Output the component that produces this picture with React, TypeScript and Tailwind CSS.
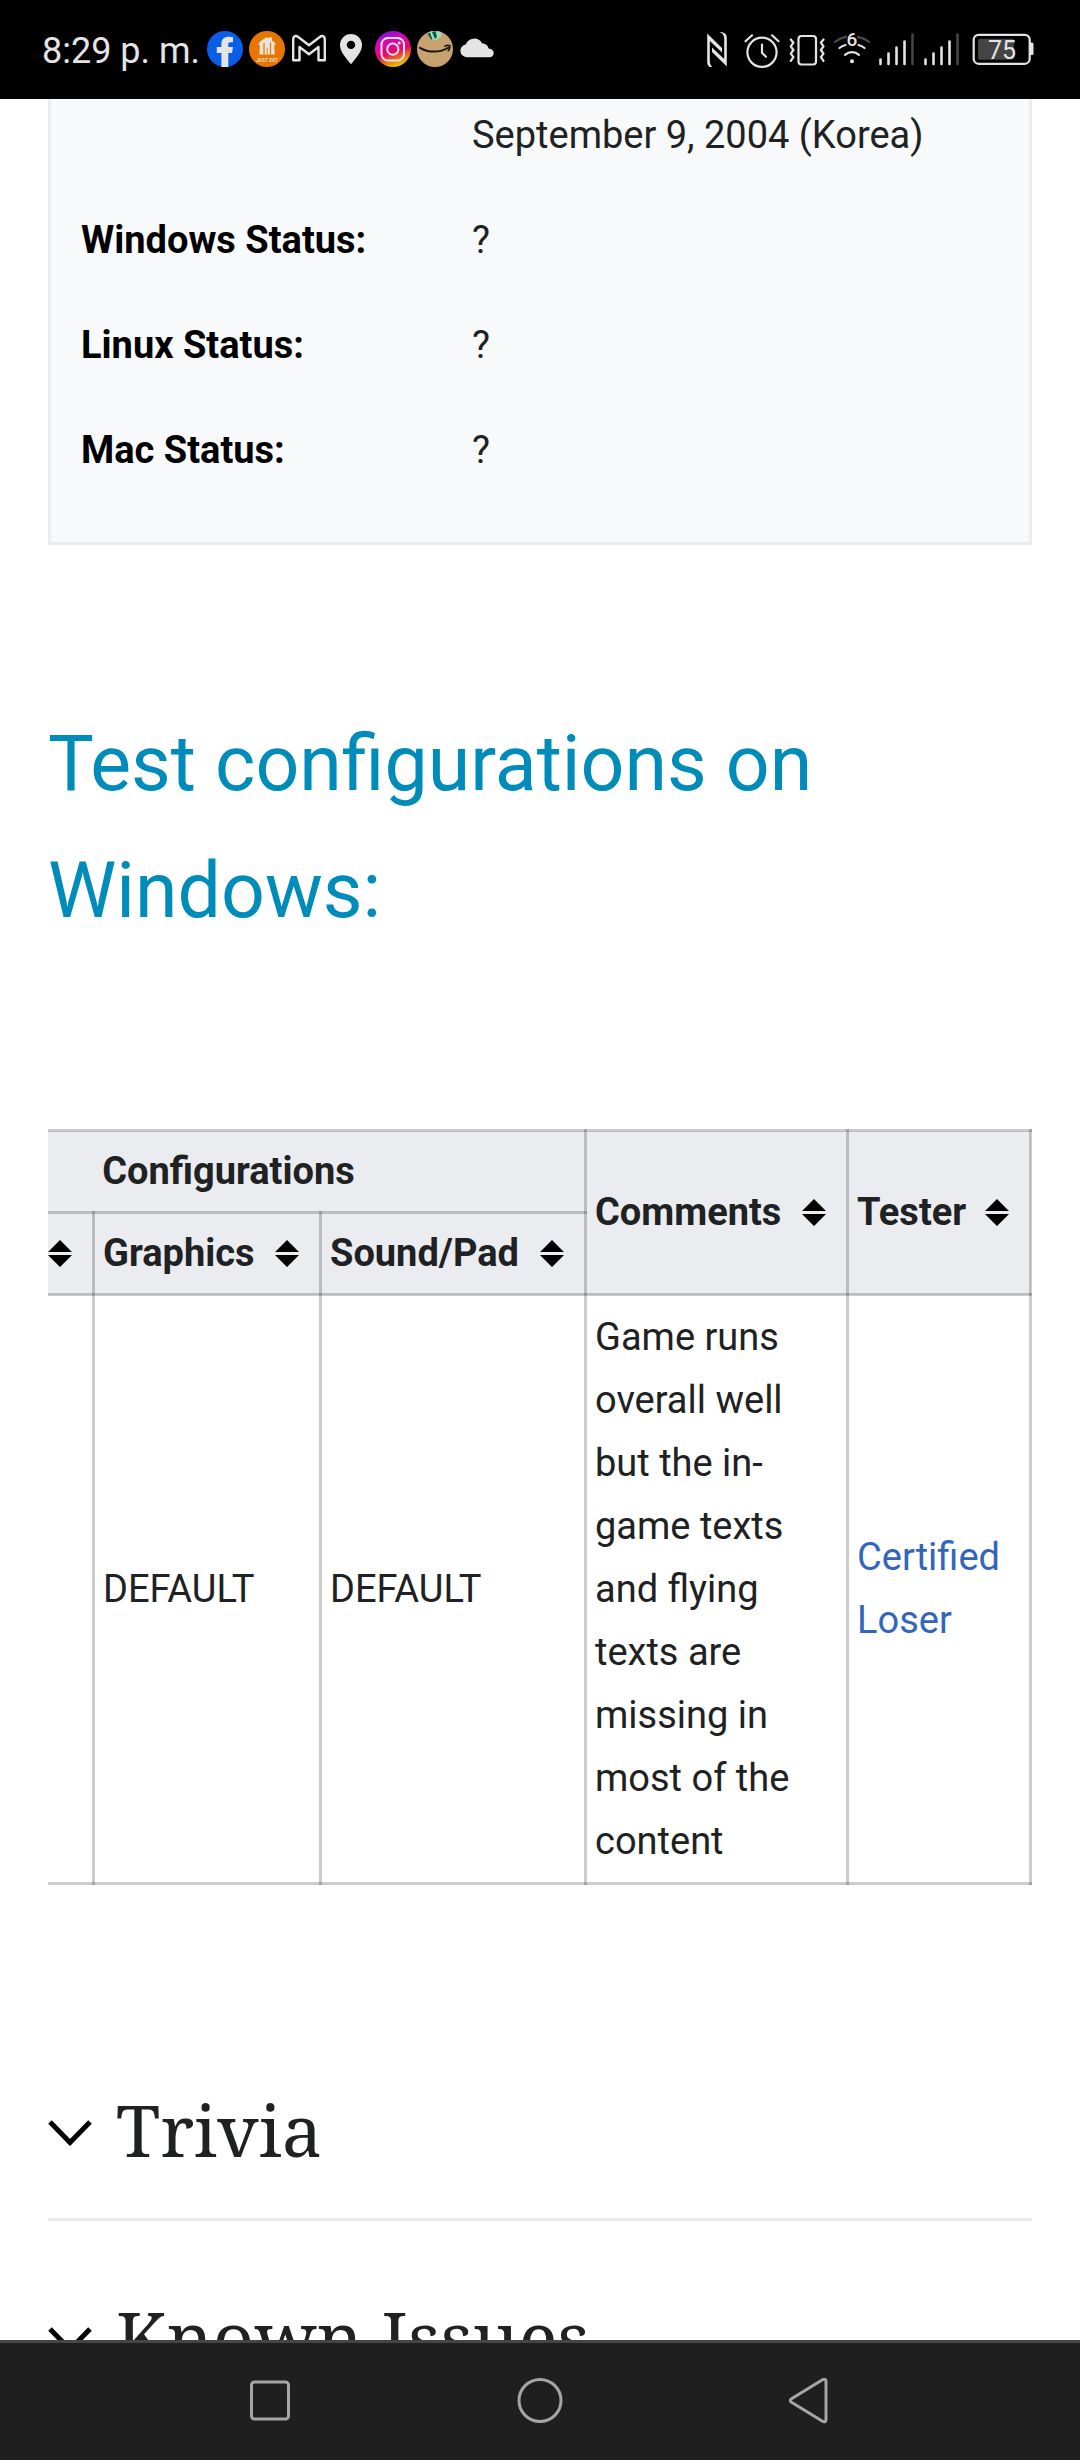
import React from "react";

const INFO_ROWS = [
  { label: "", value: "September 9, 2004 (Korea)" },
  { label: "Windows Status:", value: "?" },
  { label: "Linux Status:", value: "?" },
  { label: "Mac Status:", value: "?" },
];

const SECTIONS = ["Trivia", "Known Issues"];

// ---- status bar icons ----

const FacebookIcon = () => (
  <svg className="size-9" viewBox="0 0 36 36">
    <circle cx="18" cy="18" r="18" fill="#085ee8" />
    <path
      d="M14.4 36V22H9.8v-6h4.6v-3c0-5 3-7.300 7.100-7.300 2 0 4 .3 4.500.5v5.100h-2.500c-2 0-2.200 1-2.200 2.200V16H26l-1 6h-3.700v14z"
      fill="#e4e4e4"
    />
  </svg>
);

const JustEatIcon = () => (
  <svg className="size-9" viewBox="0 0 36 36">
    <circle cx="18" cy="18" r="18" fill="#e67600" />
    <path d="M9.200 13.500 11 10.500 17.500 6.200l2.500 1.300V6.300h3V9.500l2 1.300 1.800 2.700-1.600.6.500 9.400H10.500l.4-9.400z" fill="#ece3d8" />
    <path d="M15 12v11.500M21.500 11.500v12" stroke="#e67600" strokeWidth="1.200" />
    <path d="M18.200 17v6.500" stroke="#e67600" strokeWidth="0.800" />
    <text x="18" y="30.500" textAnchor="middle" fontSize="5" fontWeight="700" fontStyle="italic" fill="#f3dcc0">
      JUST EAT
    </text>
  </svg>
);

const GmailIcon = () => (
  <svg className="size-9" viewBox="0 0 36 36" fill="none" stroke="#e4e4e4" strokeWidth="2.400" strokeLinejoin="round">
    <path d="M2.200 8.200C2.200 5 5 4.200 7.200 6L18 14.200 28.800 6c2.200-1.800 5-1 5 2.200v21h-6.300V16L18 23.200 8.500 16v13.200H2.200z" />
  </svg>
);

const PinIcon = () => (
  <svg className="size-9" viewBox="0 0 36 36">
    <path
      fillRule="evenodd"
      d="M18 33.200C11.500 25.500 7 20 7 14a11 11 0 0 1 22 0c0 6-4.500 11.500-11 19.200zM18 9.700a4.200 4.200 0 1 0 0 8.400 4.200 4.200 0 0 0 0-8.400z"
      fill="#e4e4e4"
    />
  </svg>
);

const InstagramIcon = () => (
  <svg className="size-9" viewBox="0 0 36 36">
    <defs>
      <linearGradient id="ig" x1="0.150" y1="0.050" x2="0.500" y2="1">
        <stop offset="0" stopColor="#7a14dc" />
        <stop offset="0.300" stopColor="#d60ab4" />
        <stop offset="0.620" stopColor="#e60a64" />
        <stop offset="0.820" stopColor="#e8701a" />
        <stop offset="1" stopColor="#e8c000" />
      </linearGradient>
    </defs>
    <circle cx="18" cy="18" r="18" fill="url(#ig)" />
    <g fill="none" stroke="#efe4ea" strokeWidth="2">
      <rect x="6.500" y="7" width="22.500" height="22.500" rx="6.500" />
      <circle cx="17.800" cy="18.200" r="5.600" />
    </g>
    <circle cx="24.200" cy="11.900" r="1.500" fill="#efe4ea" />
  </svg>
);

const AmazonIcon = () => (
  <svg className="size-9" viewBox="0 0 36 36">
    <defs>
      <clipPath id="amz">
        <circle cx="18" cy="18" r="18" />
      </clipPath>
    </defs>
    <g clipPath="url(#amz)">
      <rect width="36" height="36" fill="#c7a46f" />
      <path d="M10.500 3 14 8.500l5.500.5L24 5.500V0H12z" fill="#9fe0bc" />
      <path d="M10.500 3 14 8.500l1.500.2L13 1.500zM15 1l3 7 2-2-1.500-6z" fill="#0b5a3c" />
    </g>
    <path d="M3 16.800c8.500 5.200 20 5 28.500-.3" stroke="#17120c" strokeWidth="2" fill="none" strokeLinecap="round" />
    <path d="M27.800 15.200c2-.9 4-1 5.200-.4.200 1.600-.6 3.600-1.800 5" stroke="#17120c" strokeWidth="1.500" fill="none" strokeLinecap="round" />
  </svg>
);

const CloudIcon = () => (
  <svg className="size-9" viewBox="0 0 36 36">
    <path
      d="M7.500 26.200a6.400 6.400 0 0 1-.8-12.700A9 9 0 0 1 23 12.200a7.500 7.500 0 0 1 6.700 5.300c3 .2 5 2 5 4.500 0 2.600-1.800 4.200-4.200 4.200z"
      fill="#e4e4e4"
    />
  </svg>
);

const NfcIcon = () => (
  <svg className="size-9" viewBox="0 0 36 36" fill="#e4e4e4">
    <path d="M8.200 2.500 23 17v4.500L10.800 10v20c0 3.500 1.600 6 4.700 7-5.300 0-7.300-2.200-7.300-6z" />
    <path d="M27.800 35.500 13 21v-4.500L25.200 28V8c0-3.500-1.600-6-4.700-7 5.300 0 7.300 2.200 7.300 6z" />
  </svg>
);

const AlarmIcon = () => (
  <svg className="size-9" viewBox="0 0 36 36" overflow="visible" fill="none" stroke="#e4e4e4" strokeWidth="2.200" strokeLinecap="round">
    <circle cx="18" cy="21.300" r="14.600" />
    <path d="M18 13.500v8.300l4 4M1.500 10.200 8 4.300M34.500 10.200 28 4.300" />
  </svg>
);

const VibrateIcon = () => (
  <svg className="size-9" viewBox="0 0 36 36" fill="none" stroke="#e4e4e4" strokeWidth="2.200" strokeLinecap="round" strokeLinejoin="round">
    <rect x="9.500" y="5" width="17.500" height="28.500" rx="3" />
    <path d="m1.800 8.500 2.600 3.200-2.600 3.600 2.600 3.700-2.600 3.700 2.600 3.500-2.600 3.600M34.500 8.500l-2.600 3.200 2.600 3.600-2.600 3.700 2.600 3.700-2.600 3.500 2.600 3.600" />
  </svg>
);

const WifiIcon = () => (
  <svg className="size-9 overflow-visible" viewBox="0 0 36 36" fill="none" stroke="#e4e4e4" strokeWidth="2.200" strokeLinecap="round">
    <path d="M1 10.800C4 8.500 8 6.600 12 5.900M35 10.800C32 8.500 28 6.600 24 5.900" stroke="#4a4a4a" />
    <path d="M5.500 17c1.800-1.400 3.800-2.400 6-3M30.500 17c-1.800-1.400-3.800-2.400-6-3M11 23.800c4.200-3.600 9.800-3.600 14 0" />
    <circle cx="18" cy="30.300" r="2" fill="#e4e4e4" stroke="none" />
    <text x="18" y="15" textAnchor="middle" fontSize="19" fontWeight="500" fill="#e4e4e4" stroke="none">
      6
    </text>
  </svg>
);

const SignalIcon = () => (
  <svg className="size-9" viewBox="0 0 36 36" fill="none" stroke="#e4e4e4" strokeWidth="2.600" strokeLinecap="round">
    <path d="M1.500 28.500v4.500M9.500 22.500v10.500M17.500 16.500v16.500M25.500 10.500v22.500" />
    <path d="M33.500 3.500v29.500" stroke="#444" />
  </svg>
);

const BatteryIcon = () => (
  <svg className="ml-[3px] h-9 w-[62px]" viewBox="0 0 62 36">
    <rect x="1.700" y="3.800" width="56" height="29" rx="5" fill="none" stroke="#e4e4e4" strokeWidth="2.200" />
    <rect x="6" y="7.800" width="36" height="21" rx="2" fill="#444" />
    <path d="M58 11.500h2a1.500 1.500 0 0 1 1.500 1.500v9.500A1.500 1.500 0 0 1 60 24h-2z" fill="#e4e4e4" />
    <text x="30" y="27.500" textAnchor="middle" fontSize="25" fill="#e4e4e4">
      75
    </text>
  </svg>
);

const SortIcon = () => (
  <svg className="h-[27px] w-6 shrink-0" viewBox="0 0 24 27" fill="#000">
    <path d="M12 0 24 12H0zM12 27 24 15H0z" />
  </svg>
);

const StatusBar = () => (
  <header className="flex h-[99px] shrink-0 items-center justify-between bg-black pr-[46px] pb-px pl-[42px]">
    <div className="flex items-center gap-[6px]">
      <time className="w-[159px] pt-1 text-[36px] leading-9 whitespace-nowrap text-[#e4e4e4]">8:29 p. m.</time>
      <FacebookIcon />
      <JustEatIcon />
      <GmailIcon />
      <PinIcon />
      <InstagramIcon />
      <AmazonIcon />
      <CloudIcon />
    </div>
    <div className="flex items-center gap-[9px]">
      <NfcIcon />
      <AlarmIcon />
      <VibrateIcon />
      <WifiIcon />
      <SignalIcon />
      <SignalIcon />
      <BatteryIcon />
    </div>
  </header>
);

const InfoBox = () => (
  <div className="border-x-[3px] border-b-[3px] border-[#eaecf0] bg-[#f8f9fb] px-[30px] pt-[5px] pb-[18px]">
    <table className="w-full">
      <tbody>
        {INFO_ROWS.map((row) => (
          <tr key={row.value + row.label}>
            <th className="w-[391px] pb-[42px] text-left font-bold text-black">{row.label}</th>
            <td className="pb-[42px]">{row.value}</td>
          </tr>
        ))}
      </tbody>
    </table>
  </div>
);

const SortHeader: React.FC<{ title: string; rowSpan?: number }> = ({ title, rowSpan }) => (
  <th rowSpan={rowSpan} className="border-[3px] border-black/20 p-0 font-bold">
    <button className="flex w-full items-center justify-between py-2 pr-5 pl-2">
      <span>{title}</span>
      <SortIcon />
    </button>
  </th>
);

// Scrolled all the way to the right, so the first columns are cut off
const ConfigTable = () => (
  <div className="flex justify-end overflow-hidden">
    <table className="w-[1162px] shrink-0 table-fixed border-collapse">
      <colgroup>
        <col className="w-[222px]" />
        <col className="w-[227px]" />
        <col className="w-[265px]" />
        <col className="w-[262px]" />
        <col className="w-[183px]" />
      </colgroup>
      <thead className="bg-[#eaecf0]">
        <tr>
          <th colSpan={3} className="border-[3px] border-black/20 px-2 py-2 font-bold">
            Configurations
          </th>
          <SortHeader title="Comments" rowSpan={2} />
          <SortHeader title="Tester" rowSpan={2} />
        </tr>
        <tr>
          <SortHeader title="" />
          <SortHeader title="Graphics" />
          <SortHeader title="Sound/Pad" />
        </tr>
      </thead>
      <tbody>
        <tr>
          <td className="border-[3px] border-black/20" />
          <td className="border-[3px] border-black/20 px-2">DEFAULT</td>
          <td className="border-[3px] border-black/20 px-2">DEFAULT</td>
          <td className="h-[589px] border-[3px] border-black/20 px-2">
            Game runs overall well but the in-game texts and flying texts are missing in most of the content
          </td>
          <td className="border-[3px] border-black/20 px-2">
            <a href="#certified-loser" className="text-[#36b]">
              Certified Loser
            </a>
          </td>
        </tr>
      </tbody>
    </table>
  </div>
);

const Section: React.FC<{ title: string }> = ({ title }) => (
  <h2 className="border-b-[3px] border-[#eaecf0] font-['Noto_Serif','DejaVu_Serif',serif] text-[72px]">
    <button className="flex h-[204px] w-full items-center gap-6 pt-[26px] text-left">
      <svg className="mt-2 h-[26px] w-[44px]" viewBox="0 0 44 26" fill="none" stroke="#000" strokeWidth="5">
        <path d="M2 2 22 22.500 42 2" />
      </svg>
      {title}
    </button>
  </h2>
);

const NavBar = () => (
  <nav className="grid h-[120px] shrink-0 grid-cols-3 items-center justify-items-center border-t-[3px] border-[#444645] bg-[#1f1f1f] px-[12.5%]">
    <button aria-label="Recent apps">
      <svg className="size-12" viewBox="0 0 48 48" fill="none" stroke="#a6a6a6" strokeWidth="3">
        <rect x="5.500" y="4" width="37" height="37" rx="3" />
      </svg>
    </button>
    <button aria-label="Home">
      <svg className="size-12" viewBox="0 0 48 48" fill="none" stroke="#a6a6a6" strokeWidth="3">
        <circle cx="24" cy="22.500" r="21" />
      </svg>
    </button>
    <button aria-label="Back">
      <svg className="size-12" viewBox="0 0 48 48" fill="none" stroke="#a6a6a6" strokeWidth="3" strokeLinejoin="round">
        <path d="M36.500 1.800c1.900-1.200 3.500-.3 3.500 1.700v38c0 2-1.600 2.900-3.500 1.700L5.500 24.300c-1.600-1-1.600-2.600 0-3.600z" />
      </svg>
    </button>
  </nav>
);

const App = () => {
  return (
    <div className="flex h-screen flex-col overflow-hidden bg-white font-['Roboto',sans-serif] text-[38px] leading-[63px] text-[#202122]">
      <StatusBar />
      <main className="min-h-0 flex-1 overflow-hidden px-12">
        <InfoBox />
        <h1 className="mt-[156px] mb-[174px] text-[77px] leading-[127px] text-[#008cba]">
          Test configurations on Windows:
        </h1>
        <ConfigTable />
        <div className="mt-[129px]">
          {SECTIONS.map((title) => (
            <Section key={title} title={title} />
          ))}
        </div>
      </main>
      <NavBar />
    </div>
  );
};

export default App;
